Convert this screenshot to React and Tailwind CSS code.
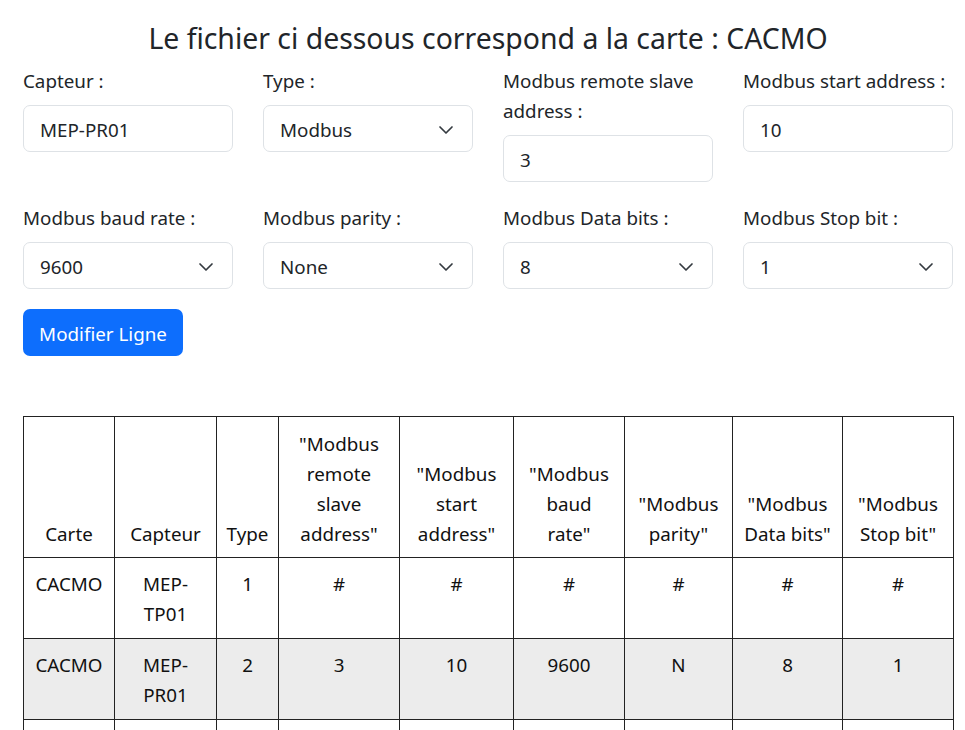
import React from "react";

function Chevron() {
  return (
    <svg width="16" height="16" viewBox="0 0 16 16" fill="none" className="shrink-0">
      <path d="m2 5 6 6 6-6" stroke="#343a40" strokeWidth="1.7" strokeLinecap="round" strokeLinejoin="round" />
    </svg>
  );
}

function Field({ label, value, select }) {
  return (
    <div className="flex flex-col">
      <label className="pt-[1px] mb-[9px] leading-[30px]">{label}</label>
      <div className="flex h-[47px] items-center justify-between rounded-[7px] border border-[#dee2e6] bg-white pl-[16px] pr-[18px] pt-[2px] leading-[30px]">
        <span>{value}</span>
        {select ? <Chevron /> : null}
      </div>
    </div>
  );
}

const headers = [
  ["Carte"],
  ["Capteur"],
  ["Type"],
  ['"Modbus', "remote", "slave", 'address"'],
  ['"Modbus', "start", 'address"'],
  ['"Modbus', "baud", 'rate"'],
  ['"Modbus', 'parity"'],
  ['"Modbus', 'Data bits"'],
  ['"Modbus', 'Stop bit"'],
];

const widths = [91, 102, 62, 121, 114, 111, 108, 110, 111];

const rows = [
  { bg: "bg-white", cells: [["CACMO"], ["MEP-", "TP01"], ["1"], ["#"], ["#"], ["#"], ["#"], ["#"], ["#"]] },
  { bg: "bg-[#ececec]", cells: [["CACMO"], ["MEP-", "PR01"], ["2"], ["3"], ["10"], ["9600"], ["N"], ["8"], ["1"]] },
  { bg: "bg-white", cells: [[""], [""], [""], [""], [""], [""], [""], [""], [""]] },
];

export default function App() {
  return (
    <div className="min-h-[730px] bg-white pl-[23px] pr-[12px] font-['Noto_Sans',sans-serif] text-[18.8px] text-[#212529]">
      <h3 className="pt-[19px] mb-[8px] text-center text-[28.4px] leading-[38px] font-normal">
        Le fichier ci dessous correspond a la carte : CACMO
      </h3>
      <div className="grid grid-cols-4 gap-x-[30px] gap-y-[20px]">
        <Field label="Capteur :" value="MEP-PR01" />
        <Field label="Type :" value="Modbus" select />
        <Field label="Modbus remote slave address :" value="3" />
        <Field label="Modbus start address :" value="10" />
        <Field label="Modbus baud rate :" value="9600" select />
        <Field label="Modbus parity :" value="None" select />
        <Field label="Modbus Data bits :" value="8" select />
        <Field label="Modbus Stop bit :" value="1" select />
      </div>
      <button className="mt-[20px] h-[47px] w-[160px] rounded-[7px] bg-[#0d6efd] pt-[2px] text-[18.8px] leading-[30px] text-white">
        Modifier Ligne
      </button>
      <table className="mt-[60px] w-[930px] table-fixed border-collapse text-center text-[18.8px] leading-[30px] text-[#111]">
        <colgroup>
          {widths.map((w, i) => (
            <col key={i} style={{ width: w }} />
          ))}
        </colgroup>
        <thead>
          <tr>
            {headers.map((h, i) => (
              <th key={i} className="h-[141px] border border-[#222] px-[4px] pt-[12px] pb-[8px] align-bottom font-normal">
                {h.map((l, j) => (
                  <div key={j} className="whitespace-nowrap">{l}</div>
                ))}
              </th>
            ))}
          </tr>
        </thead>
        <tbody>
          {rows.map((r, i) => (
            <tr key={i} className={r.bg}>
              {r.cells.map((c, j) => (
                <td key={j} className="h-[81px] border border-[#222] px-[4px] pt-[11px] pb-[9px] align-top">
                  {c.map((l, k) => (
                    <div key={k} className="whitespace-nowrap">{l}</div>
                  ))}
                </td>
              ))}
            </tr>
          ))}
        </tbody>
      </table>
    </div>
  );
}
